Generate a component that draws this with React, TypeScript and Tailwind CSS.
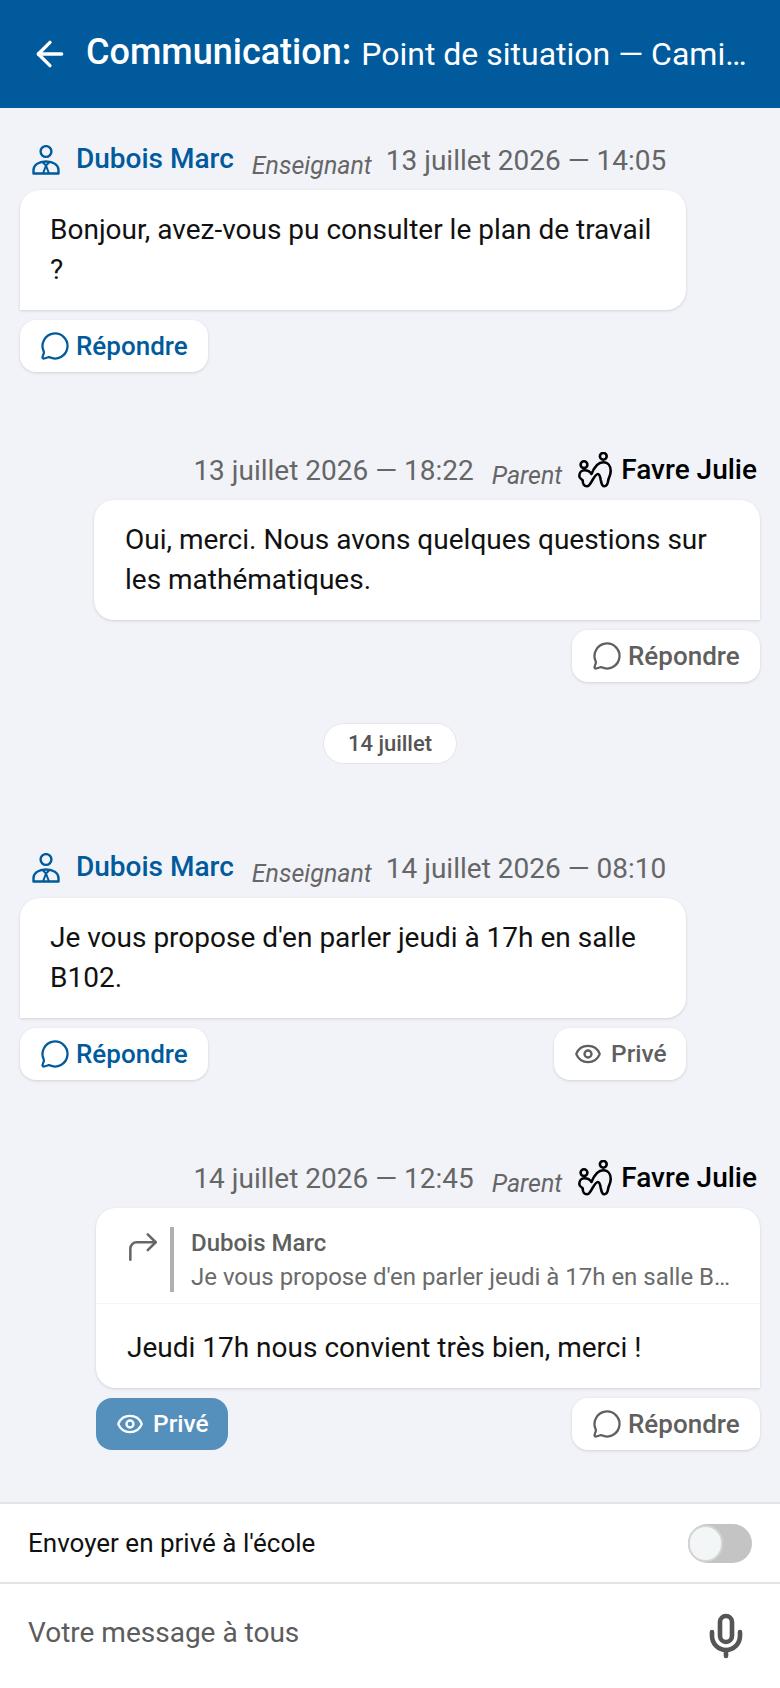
import React from 'react';
import { ArrowLeft, CornerUpRight, Eye, MessageCircle, Mic } from 'lucide-react';

function TeacherIcon() {
  return (
    <svg viewBox="0 0 28 30" className="w-[28px] h-[30px] text-[#005a9c]" fill="none" stroke="currentColor" strokeWidth="2.400" strokeLinejoin="round">
      <circle cx="14" cy="6.500" r="5.400" />
      <path d="M1.500 28.500v-3.500c0-5 5-8.500 12.500-8.500s12.500 3.500 12.500 8.500v3.500z" />
      <path d="M10.500 17l3.500 3.500 3.500-3.500M14 20.500l-3 8M14 20.500l3 8" strokeWidth="2" />
    </svg>
  );
}

function ParentIcon() {
  return (
    <svg viewBox="0 0 34 36" className="w-[34px] h-[36px] text-black" fill="none" stroke="currentColor" strokeWidth="2.600" strokeLinecap="round" strokeLinejoin="round">
      <circle cx="6" cy="12.700" r="3.400" />
      <circle cx="25.300" cy="4.300" r="3.400" />
      <path d="M13.500 22C15.500 17 19 10.300 25.300 10.300c4.700 0 7.400 3.700 7.400 8.700 0 4-1.700 6-2.400 9-.5 3-.8 6.300-4.100 6.300-2.700 0-2.700-3.300-3.500-6.600-.6-3-1-5.700-2.800-5.700-1.600 0-3.400 2.600-5.400 6-1.800 3.200-3 6.300-5.600 6.300-2.500 0-4.200-2.300-4.200-5.900-.7-1.300-3.400-1.500-3.400-4.400 0-3.500 2.200-5.700 5.200-5.700 3.300 0 5.300 1 7 3.700z" />
    </svg>
  );
}

function ActionButton({ kind, tone }: { kind: 'reply' | 'private'; tone: 'blue' | 'gray' | 'active' }) {
  const color = tone === 'blue' ? 'text-[#005a9c]' : tone === 'gray' ? 'text-[#5f5f5f]' : 'text-white';
  const bg = tone === 'active' ? 'bg-[#5590bd]' : 'bg-white shadow-[0_1px_3px_rgba(0,0,0,0.14)]';
  return (
    <button className={`h-[52px] rounded-[16px] flex items-center font-medium ${color} ${bg} ${kind === 'reply' ? 'w-[188px] pl-[20px] gap-[6px] text-[26px]' : 'w-[132px] pl-[20px] gap-[9px] text-[24.500px]'}`}>
      {kind === 'reply' ? (
        <MessageCircle className="w-[30px] h-[30px]" strokeWidth={1.8} />
      ) : (
        <Eye className="w-[28px] h-[28px]" strokeWidth={2} />
      )}
      {kind === 'reply' ? 'Répondre' : 'Privé'}
    </button>
  );
}

function TeacherMeta({ date }: { date: string }) {
  return (
    <div className="h-[46px] flex items-center pl-[12px] whitespace-nowrap">
      <TeacherIcon />
      <span className="ml-[16px] mb-[2px] text-[28px] font-medium text-[#005a9c]">Dubois Marc</span>
      <span className="ml-[18px] mt-[12px] text-[25px] italic text-[#666666]">Enseignant</span>
      <span className="ml-[14px] mt-[2px] text-[28px] text-[#666666]">{date}</span>
    </div>
  );
}

function ParentMeta({ date }: { date: string }) {
  return (
    <div className="h-[46px] flex items-center justify-end pr-[3px] whitespace-nowrap">
      <span className="mt-[2px] text-[28px] text-[#666666]">{date}</span>
      <span className="ml-[18px] mt-[12px] text-[25px] italic text-[#666666]">Parent</span>
      <span className="ml-[16px]"><ParentIcon /></span>
      <span className="ml-[9px] text-[28px] font-medium text-black">Favre Julie</span>
    </div>
  );
}

export default function App() {
  return (
    <div className="h-[1688px] w-[780px] flex flex-col bg-[#f1f3f9] overflow-hidden font-['Roboto',sans-serif]">
      {/* Header */}
      <div className="h-[108px] shrink-0 bg-[#005a9c] flex items-center pl-[30px] pr-[28px] text-white">
        <ArrowLeft className="w-[40px] h-[40px] shrink-0" strokeWidth={2} />
        <span className="ml-[16px] mb-[4px] text-[36px] font-medium whitespace-nowrap">Communication:</span>
        <span className="ml-[10px] text-[32px] truncate min-w-0">Point de situation — Camille Favre</span>
      </div>

      {/* Messages */}
      <div className="flex-1 px-[20px] pt-[29px]">
        <TeacherMeta date="13 juillet 2026 — 14:05" />
        <div className="mt-[7px] w-[666px] bg-white rounded-[20px] rounded-bl-none shadow-[0_1px_3px_rgba(0,0,0,0.14)] pl-[30px] pr-[31px] py-[20px] text-[28px] leading-[40px] text-[#111111]">
          Bonjour, avez-vous pu consulter le plan de travail ?
        </div>
        <div className="mt-[10px]"><ActionButton kind="reply" tone="blue" /></div>

        <div className="mt-[75px] flex flex-col items-end">
          <div className="w-full"><ParentMeta date="13 juillet 2026 — 18:22" /></div>
          <div className="mt-[7px] w-[666px] bg-white rounded-[20px] rounded-br-none shadow-[0_1px_3px_rgba(0,0,0,0.14)] px-[31px] py-[20px] text-[28px] leading-[40px] text-[#111111]">
            Oui, merci. Nous avons quelques questions sur les mathématiques.
          </div>
          <div className="mt-[10px]"><ActionButton kind="reply" tone="gray" /></div>
        </div>

        <div className="mt-[41px] flex justify-center">
          <span className="h-[41px] w-[134px] rounded-full bg-white border border-[#e6e6e6] flex items-center justify-center text-[22px] font-medium text-[#555555]">14 juillet</span>
        </div>

        <div className="mt-[81px]"><TeacherMeta date="14 juillet 2026 — 08:10" /></div>
        <div className="mt-[7px] w-[666px] bg-white rounded-[20px] rounded-bl-none shadow-[0_1px_3px_rgba(0,0,0,0.14)] pl-[30px] pr-[31px] py-[20px] text-[28px] leading-[40px] text-[#111111]">
          Je vous propose d'en parler jeudi à 17h en salle B102.
        </div>
        <div className="mt-[10px] w-[666px] flex justify-between">
          <ActionButton kind="reply" tone="blue" />
          <ActionButton kind="private" tone="gray" />
        </div>

        <div className="mt-[75px] flex flex-col items-end">
          <div className="w-full"><ParentMeta date="14 juillet 2026 — 12:45" /></div>
          <div className="mt-[7px] w-[664px] bg-white rounded-[20px] rounded-br-none shadow-[0_1px_3px_rgba(0,0,0,0.14)] text-[#111111]">
            <div className="flex items-center h-[96px] pt-[7px] pl-[28px] pr-[28px] border-b border-[#f6f6f8]">
              <CornerUpRight className="w-[38px] h-[38px] text-[#666666] shrink-0 mb-[24px]" strokeWidth={1.6} />
              <div className="ml-[8px] pl-[17px] border-l-[4px] border-[#b0b0b0] h-[65px] min-w-0 flex flex-col justify-center">
                <div className="text-[24px] leading-[33px] font-medium text-[#5f5f5f]">Dubois Marc</div>
                <div className="text-[24px] leading-[33px] mt-[1px] text-[#6b6b6b] truncate">Je vous propose d'en parler jeudi à 17h en salle B102.</div>
              </div>
            </div>
            <div className="pl-[31px] pr-[31px] pt-[24px] pb-[20px] text-[28px] leading-[40px]">Jeudi 17h nous convient très bien, merci !</div>
          </div>
          <div className="mt-[10px] w-[664px] flex justify-between">
            <ActionButton kind="private" tone="active" />
            <ActionButton kind="reply" tone="gray" />
          </div>
        </div>
      </div>

      {/* Composer */}
      <div className="shrink-0 bg-white border-t-2 border-[#e4e4e4]">
        <div className="h-[78px] flex items-center justify-between pl-[28px] pr-[28px]">
          <span className="text-[26px] text-[#111111]">Envoyer en privé à l'école</span>
          <div className="w-[64px] h-[39px] rounded-full bg-[#c4c4c4] flex items-center">
            <div className="w-[35px] h-[37px] rounded-full bg-[#f3f6f6] border-2 border-[#d4d4d4]" />
          </div>
        </div>
        <div className="h-[106px] border-t-2 border-[#e4e4e4] flex items-center justify-between pl-[28px] pr-[30px]">
          <span className="mb-[6px] text-[28px] text-[#5c5c5c]">Votre message à tous</span>
          <Mic className="w-[48px] h-[48px] text-[#555555]" strokeWidth={2.3} />
        </div>
      </div>
    </div>
  );
}
